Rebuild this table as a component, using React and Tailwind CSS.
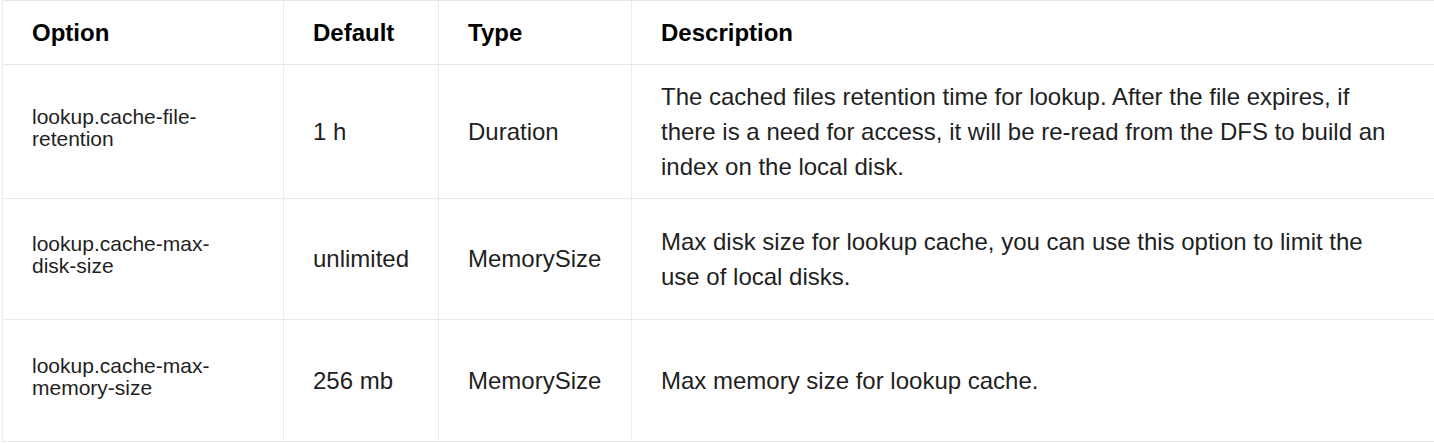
import React from "react";

const rows = [
  {
    option: "lookup.cache-file-retention",
    def: "1 h",
    type: "Duration",
    desc: "The cached files retention time for lookup. After the file expires, if there is a need for access, it will be re-read from the DFS to build an index on the local disk.",
    h: "h-[134px]",
  },
  {
    option: "lookup.cache-max-disk-size",
    def: "unlimited",
    type: "MemorySize",
    desc: "Max disk size for lookup cache, you can use this option to limit the use of local disks.",
    h: "h-[121px]",
  },
  {
    option: "lookup.cache-max-memory-size",
    def: "256 mb",
    type: "MemorySize",
    desc: "Max memory size for lookup cache.",
    h: "h-[122px]",
  },
];

export default function App() {
  return (
    <div
      className="w-[1434px] h-[443px] overflow-hidden bg-white pl-[2px]"
      style={{ fontFamily: '"Liberation Sans", Arial, sans-serif' }}
    >
      <table className="table-fixed border-collapse w-[1432px] text-left text-[#1f1f1f]">
        <colgroup>
          <col className="w-[281px]" />
          <col className="w-[155px]" />
          <col className="w-[193px]" />
          <col />
        </colgroup>
        <thead>
          <tr className="h-[64px] border-y border-[#e3e8ee]">
            <th className="px-[29px] text-[24px] leading-[36px] font-bold text-black border-x border-[#ebebeb]">
              Option
            </th>
            <th className="px-[29px] text-[24px] leading-[36px] font-bold text-black border-x border-[#ebebeb]">
              Default
            </th>
            <th className="px-[29px] text-[24px] leading-[36px] font-bold text-black border-x border-[#ebebeb]">
              Type
            </th>
            <th className="px-[29px] text-[24px] leading-[36px] font-bold text-black border-l border-[#ebebeb]">
              Description
            </th>
          </tr>
        </thead>
        <tbody>
          {rows.map((r) => (
            <tr key={r.option} className={`${r.h} border-b border-[#e9e9e9]`}>
              <td className="pl-[29px] pr-[36px] pb-[8px] text-[21px] leading-[22px] border-x border-[#ebebeb] align-middle break-words">
                {r.option}
              </td>
              <td className="px-[29px] text-[24px] leading-[36px] border-x border-[#ebebeb] align-middle">
                {r.def}
              </td>
              <td className="px-[29px] text-[24px] leading-[36px] border-x border-[#ebebeb] align-middle">
                {r.type}
              </td>
              <td className="pl-[29px] pr-[30px] text-[24px] leading-[35px] border-l border-[#ebebeb] align-middle">
                {r.desc}
              </td>
            </tr>
          ))}
        </tbody>
      </table>
    </div>
  );
}
